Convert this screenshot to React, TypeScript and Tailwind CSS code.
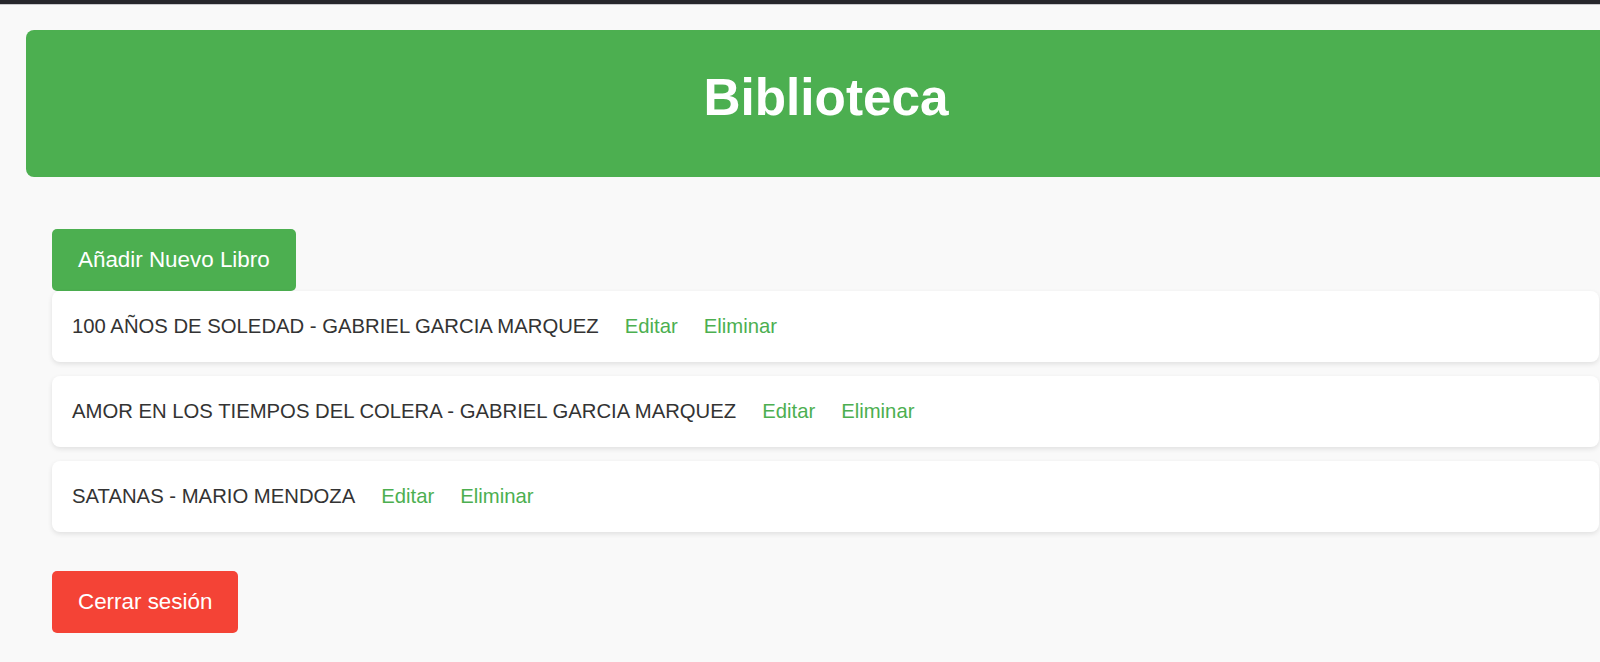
type Book = {
  id: number;
  title: string;
  author: string;
};

const books: Book[] = [
  { id: 1, title: "100 AÑOS DE SOLEDAD", author: "GABRIEL GARCIA MARQUEZ" },
  { id: 2, title: "AMOR EN LOS TIEMPOS DEL COLERA", author: "GABRIEL GARCIA MARQUEZ" },
  { id: 3, title: "SATANAS", author: "MARIO MENDOZA" },
];

function BookRow({ book }: { book: Book }) {
  return (
    <li className="flex h-[71px] items-center rounded-lg bg-white pl-[20px] shadow-[0_2px_5px_rgba(0,0,0,0.1)]">
      <span>
        {book.title} - {book.author}
      </span>
      <a href="#" className="ml-[26px] text-[#4caf50]">
        Editar
      </a>
      <a href="#" className="ml-[26px] text-[#4caf50]">
        Eliminar
      </a>
    </li>
  );
}

export default function App() {
  return (
    <div className="h-[662px] w-[1600px] overflow-hidden bg-[#f9f9f9] font-['Liberation_Sans',Arial,sans-serif] text-[20.3px] text-[#333]">
      <div className="h-[4px] bg-[#27272c]" />
      <div className="h-px bg-[#c9c9cc]" />

      <div className="pl-[26px] pt-[25px]">
        <header className="h-[147px] w-[1600px] rounded-lg bg-[#4caf50] pt-[43px] text-center">
          <h1 className="text-[51.3px] font-bold leading-[50px] text-white">Biblioteca</h1>
        </header>
      </div>

      <main className="pl-[52px] pr-[1px] pt-[52px]">
        <button className="h-[62px] rounded-[5px] bg-[#4caf50] px-[26px] text-[22.4px] text-white">
          Añadir Nuevo Libro
        </button>
        <ul className="flex flex-col gap-[14px]">
          {books.map((b) => (
            <BookRow key={b.id} book={b} />
          ))}
        </ul>
        <button className="mt-[39px] h-[62px] rounded-[5px] bg-[#f44336] px-[26px] text-[22.4px] text-white">
          Cerrar sesión
        </button>
      </main>
    </div>
  );
}
